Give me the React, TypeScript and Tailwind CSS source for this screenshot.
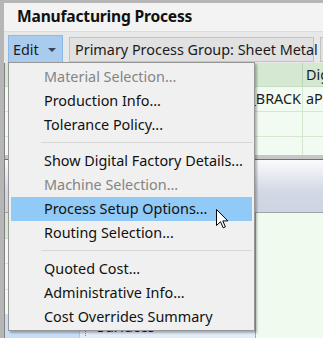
const menuItems: { label: string; disabled?: boolean; active?: boolean; sep?: boolean }[] = [
  { label: 'Material Selection...', disabled: true },
  { label: 'Production Info...' },
  { label: 'Tolerance Policy...' },
  { label: '', sep: true },
  { label: 'Show Digital Factory Details...' },
  { label: 'Machine Selection...', disabled: true },
  { label: 'Process Setup Options...', active: true },
  { label: 'Routing Selection...' },
  { label: '', sep: true },
  { label: 'Quoted Cost...' },
  { label: 'Administrative Info...' },
  { label: 'Cost Overrides Summary' },
];

function Cursor() {
  return (
    <svg width="13" height="20" viewBox="0 0 13 20" className="absolute left-[216px] top-[209px]">
      <path
        d="M0.5 0.5 L0.5 16.5 L4.5 12.7 L7.2 18.8 L9.4 17.9 L6.8 11.9 L11.8 11.9 Z"
        fill="#ffffff"
        stroke="#000000"
        strokeWidth="1"
        strokeLinejoin="miter"
      />
    </svg>
  );
}

export default function App() {
  return (
    <div className="relative w-[323px] h-[338px] overflow-hidden bg-[#f0f0f0] font-['Noto_Sans',sans-serif] text-[14.4px] text-[#1b1b1b]">
      <div className="flex flex-col h-full border-t-[3px] border-l-[4px] border-[#b6b6b6]">
        {/* Title */}
        <div className="h-[28px] shrink-0 flex items-center pl-[13px] bg-[#f3f3f3] font-bold text-[15.6px] tracking-[-0.2px] text-[#111]">
          Manufacturing Process
        </div>

        {/* Toolbar */}
        <div className="h-[32px] shrink-0 flex items-start gap-[6px] pl-[4px] pt-[3px] bg-[#e8e8e8] border-t border-[#dcdcdc]">
          <div className="h-[29px] w-[55px] shrink-0 flex items-center gap-[9px] pl-[4px] bg-[#a9cbee] border border-b-0 border-[#8ab9e9]">
            <span>Edit</span>
            <svg width="8" height="4" viewBox="0 0 8 4">
              <polygon points="0,0 8,0 4,4" fill="#3f3f58" />
            </svg>
          </div>
          <div className="mt-[2px] h-[25px] w-[245px] shrink-0 flex items-center pl-[5px] bg-[#e1e1e1] border border-[#c3c3c3] whitespace-nowrap">
            Primary Process Group: Sheet Metal
          </div>
          <div className="mt-[2px] h-[25px] w-[40px] shrink-0 flex items-center pl-[1px] bg-[#e1e1e1] border border-[#c3c3c3] text-[#c07a3a] whitespace-nowrap overflow-hidden">
            Material
          </div>
        </div>

        {/* Content */}
        <div className="flex-1 flex flex-col border-l border-[#818181] min-h-0">
          {/* Top grid */}
          <div className="h-[92px] shrink-0 flex flex-col bg-[#f2fbf2] overflow-hidden">
            <div className="h-[24px] shrink-0 flex bg-[#d4e8d2] border-b border-[#c4dcc2]">
              <div className="flex-1" />
              <div className="w-[21px] border-l border-[#bcd5ba] pl-[3px] flex items-center whitespace-nowrap overflow-hidden">Digital</div>
            </div>
            {['_BRACK', '', '', ''].map((t, i) => (
              <div key={i} className="h-[25px] shrink-0 flex border-b border-[#d3e7d1]">
                <div className="flex-1 flex items-center justify-end pr-[1px] whitespace-nowrap overflow-hidden">{t}</div>
                <div className="w-[21px] border-l border-[#d3e7d1] pl-[3px] flex items-center whitespace-nowrap overflow-hidden">
                  {i === 0 ? 'aPrimary' : ''}
                </div>
              </div>
            ))}
          </div>

          {/* Splitter */}
          <div className="h-[5px] shrink-0 bg-[#c6c6c6] border-b border-[#6f6f6f]" />

          {/* Lower header */}
          <div className="h-[53px] shrink-0 bg-gradient-to-b from-[#fbfbfd] via-[#d2d9e5] via-60% to-[#cdd5e2] border-b border-[#a3a3a3]" />

          {/* Lower body */}
          <div className="flex-1 flex min-h-0">
            <div className="w-[251px] shrink-0 flex flex-col bg-[#f2fbf2] border-r border-[#a8a8a8]">
              <div className="h-[26px] shrink-0 bg-[#d4e8d2] border-b border-[#c4dcc2]" />
              <div className="h-[25px] shrink-0 border-b border-[#d3e7d1]" />
              <div className="h-[26px] shrink-0 border-b border-[#d3e7d1]" />
              <div className="h-[25px] shrink-0 border-b border-[#d3e7d1]" />
              <div className="flex-1 flex bg-[#e3edf9]">
                <div className="w-[75px] shrink-0 bg-[#c9ddf6] border-r border-[#b7c9de]" />
                <div className="relative flex items-center pl-[17px]">
                  <svg width="10" height="22" viewBox="0 0 10 22" className="absolute left-[2px] top-0">
                    <line x1="3.5" y1="0" x2="3.5" y2="22" stroke="#8a8a8a" strokeDasharray="1 1" />
                    <line x1="3.5" y1="15.5" x2="9" y2="15.5" stroke="#8a8a8a" strokeDasharray="1 1" />
                  </svg>
                  <span className="mt-[1px]">Surfaces</span>
                </div>
              </div>
            </div>
            <div className="flex-1 bg-[#f0fbf0]" />
          </div>
        </div>
      </div>

      {/* Dropdown menu */}
      <div className="absolute left-[8px] top-[62px] w-[247px] pt-[2px] pb-[1px] bg-[#f0f0f0] border border-[#979797] shadow-[2px_2px_2px_rgba(0,0,0,0.28)]">
        {menuItems.map((item, i) =>
          item.sep ? (
            <div key={i} className="h-[12px] pt-[5px] pl-[32px] pr-[2px]">
              <div className="h-px bg-[#d7d7d7]" />
            </div>
          ) : (
            <div
              key={i}
              className={`h-[24px] mx-[2px] flex items-center pl-[33px] whitespace-nowrap ${
                item.active ? 'bg-[#91c9f7]' : ''
              } ${item.disabled ? 'text-[#848484]' : 'text-[#111]'}`}
            >
              {item.label}
            </div>
          )
        )}
      </div>

      <Cursor />
    </div>
  );
}
